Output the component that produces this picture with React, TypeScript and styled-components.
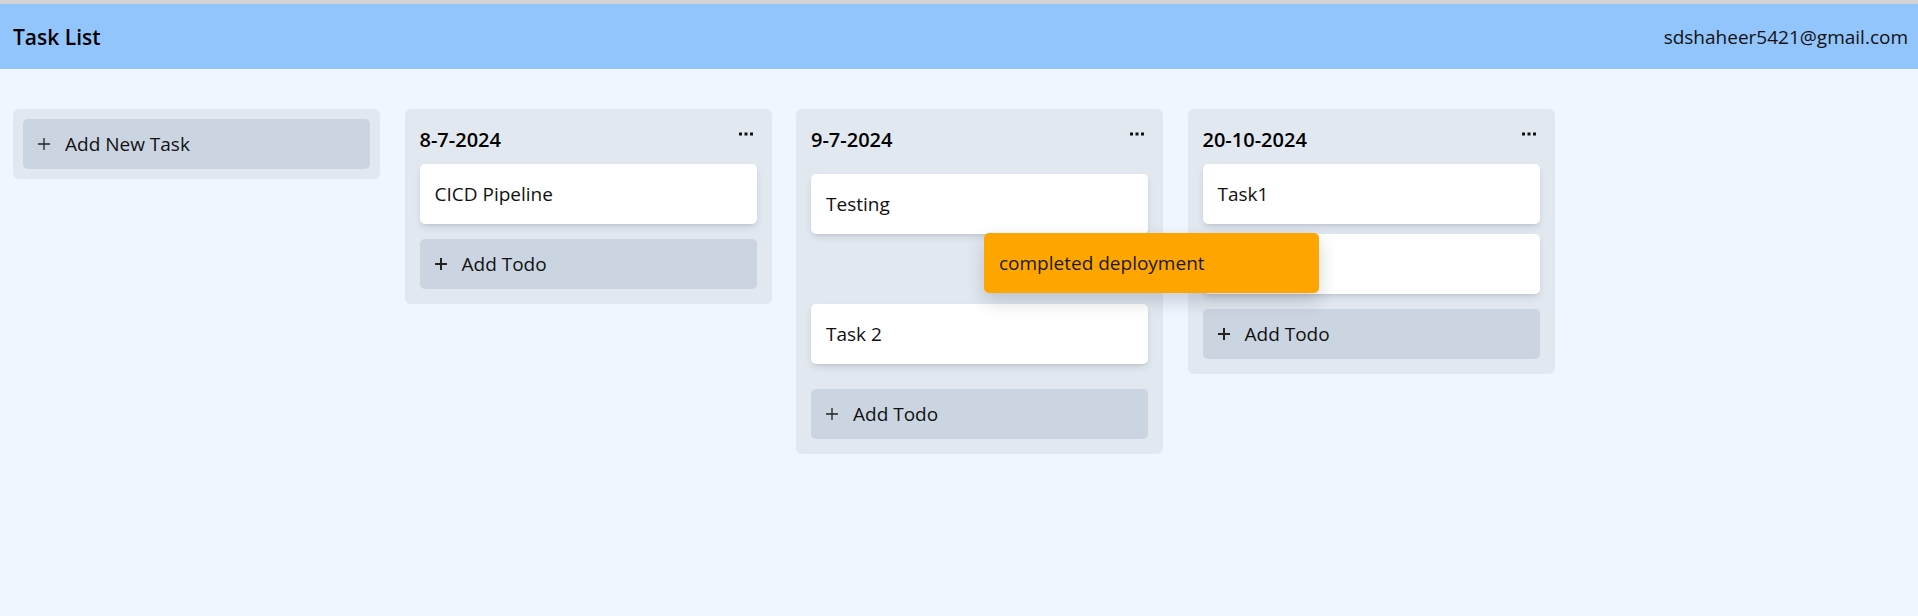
import React from "react";
import styled, { createGlobalStyle } from "styled-components";

const Global = createGlobalStyle`
  html, body { margin: 0; padding: 0; }
  body {
    background: #eff6ff;
    font-family: "Open Sans", "Noto Sans", sans-serif;
    color: #111;
  }
  * { box-sizing: border-box; }
`;

const Page = styled.div`
  position: relative;
  min-height: 616px;
  background: #eff6ff;
  border-top: 4px solid #d4d4d4;
`;

const Header = styled.header`
  height: 65px;
  background: #93c5fd;
  display: flex;
  align-items: center;
  justify-content: space-between;
  padding: 0 10px 0 13px;
`;

const Title = styled.h1`
  margin: 0;
  font-size: 21px;
  font-weight: 600;
  color: #000;
`;

const Email = styled.span`
  font-size: 19px;
  color: #111;
`;

const Board = styled.main`
  display: flex;
  align-items: flex-start;
  gap: 24.5px;
  padding: 40px 13px;
`;

const Column = styled.section<{ $pad?: number }>`
  width: 367px;
  flex: none;
  background: #e2e8f0;
  border-radius: 6px;
  padding: ${(p) => p.$pad ?? 15}px;
  display: flex;
  flex-direction: column;
`;

const ColumnHead = styled.div`
  height: 32px;
  margin-bottom: 8px;
  display: flex;
  justify-content: space-between;
  align-items: flex-start;
`;

const ColumnTitle = styled.h2`
  margin: 0;
  font-size: 20px;
  line-height: 32px;
  font-weight: 600;
  color: #000;
`;

const Dots = styled.button`
  border: 0;
  background: none;
  padding: 0;
  margin: 8px 4px 0 0;
  display: flex;
  color: #111;
`;

const List = styled.div<{ $over?: boolean }>`
  display: flex;
  flex-direction: column;
  padding: ${(p) => (p.$over ? "10px 0" : "0")};
`;

const Card = styled.div`
  height: 60px;
  margin-bottom: 10px;
  background: #fff;
  border-radius: 5px;
  box-shadow: 0 4px 8px -2px rgba(15, 23, 42, 0.14), 0 2px 4px -2px rgba(15, 23, 42, 0.1);
  display: flex;
  align-items: center;
  padding: 0 15px;
  font-size: 19px;
  color: #111;
`;

const Placeholder = styled.div`
  height: 60px;
`;

const AddButton = styled.button<{ $top?: number }>`
  height: 50px;
  width: 100%;
  margin-top: ${(p) => p.$top ?? 5}px;
  border: 0;
  border-radius: 5px;
  background: #cbd5e1;
  display: flex;
  align-items: center;
  gap: 14px;
  padding: 0 14px;
  font-family: inherit;
  font-size: 19px;
  color: #111;
  text-align: left;
  cursor: pointer;
`;

const DragCard = styled.div`
  position: absolute;
  left: 984px;
  top: 229px;
  width: 335px;
  height: 60px;
  background: #ffa500;
  border-radius: 5px;
  box-shadow: 0 8px 18px rgba(15, 23, 42, 0.18);
  display: flex;
  align-items: center;
  padding: 0 15px;
  font-size: 19px;
  color: #1a1a1a;
`;

const Plus = ({ w = 1.6 }: { w?: number }) => (
  <svg width="14" height="14" viewBox="0 0 14 14" fill="none">
    <path d="M7 1v12M1 7h12" stroke="#222" strokeWidth={w} />
  </svg>
);

const Ellipsis = () => (
  <svg width="14" height="4" viewBox="0 0 14 4">
    <rect x="0" y="0.5" width="3" height="3" fill="#111" />
    <rect x="5.5" y="0.5" width="3" height="3" fill="#111" />
    <rect x="11" y="0.5" width="3" height="3" fill="#111" />
  </svg>
);

type Col = { date: string; items: string[]; over?: boolean; placeholderAt?: number };

const cols: Col[] = [
  { date: "8-7-2024", items: ["CICD Pipeline"] },
  { date: "9-7-2024", items: ["Testing", "Task 2"], over: true, placeholderAt: 1 },
  { date: "20-10-2024", items: ["Task1", ""] },
];

export default function App() {
  return (
    <Page>
      <Global />
      <Header>
        <Title>Task List</Title>
        <Email>sdshaheer5421@gmail.com</Email>
      </Header>
      <Board>
        <Column $pad={10}>
          <AddButton $top={0}>
            <Plus w={1.3} />
            Add New Task
          </AddButton>
        </Column>
        {cols.map((c) => (
          <Column key={c.date}>
            <ColumnHead>
              <ColumnTitle>{c.date}</ColumnTitle>
              <Dots aria-label="more">
                <Ellipsis />
              </Dots>
            </ColumnHead>
            <List $over={c.over}>
              {c.items.map((it, i) => (
                <React.Fragment key={i}>
                  {c.placeholderAt === i && <Placeholder />}
                  <Card>{it}</Card>
                </React.Fragment>
              ))}
            </List>
            <AddButton>
              <Plus w={c.over ? 1.3 : 2} />
              Add Todo
            </AddButton>
          </Column>
        ))}
      </Board>
      <DragCard>completed deployment</DragCard>
    </Page>
  );
}
